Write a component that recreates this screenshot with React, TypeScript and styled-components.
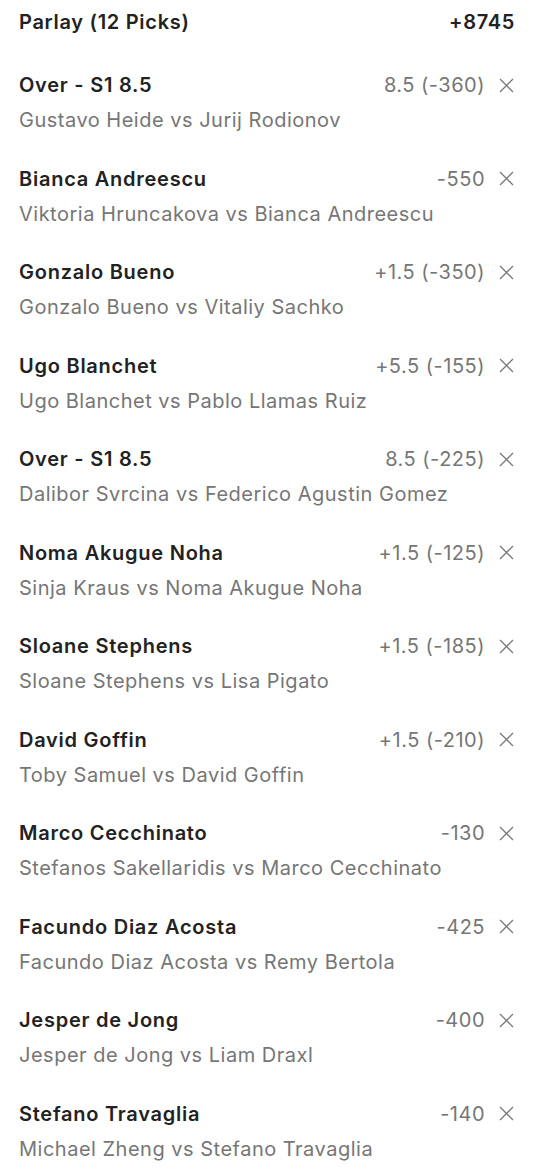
import styled, { createGlobalStyle } from 'styled-components'

type Pick = {
  title: string
  odds: string
  match: string
}

const picks: Pick[] = [
  { title: 'Over - S1 8.5', odds: '8.5 (-360)', match: 'Gustavo Heide vs Jurij Rodionov' },
  { title: 'Bianca Andreescu', odds: '-550', match: 'Viktoria Hruncakova vs Bianca Andreescu' },
  { title: 'Gonzalo Bueno', odds: '+1.5 (-350)', match: 'Gonzalo Bueno vs Vitaliy Sachko' },
  { title: 'Ugo Blanchet', odds: '+5.5 (-155)', match: 'Ugo Blanchet vs Pablo Llamas Ruiz' },
  { title: 'Over - S1 8.5', odds: '8.5 (-225)', match: 'Dalibor Svrcina vs Federico Agustin Gomez' },
  { title: 'Noma Akugue Noha', odds: '+1.5 (-125)', match: 'Sinja Kraus vs Noma Akugue Noha' },
  { title: 'Sloane Stephens', odds: '+1.5 (-185)', match: 'Sloane Stephens vs Lisa Pigato' },
  { title: 'David Goffin', odds: '+1.5 (-210)', match: 'Toby Samuel vs David Goffin' },
  { title: 'Marco Cecchinato', odds: '-130', match: 'Stefanos Sakellaridis vs Marco Cecchinato' },
  { title: 'Facundo Diaz Acosta', odds: '-425', match: 'Facundo Diaz Acosta vs Remy Bertola' },
  { title: 'Jesper de Jong', odds: '-400', match: 'Jesper de Jong vs Liam Draxl' },
  { title: 'Stefano Travaglia', odds: '-140', match: 'Michael Zheng vs Stefano Travaglia' },
]

const GlobalStyle = createGlobalStyle`
  body {
    margin: 0;
    background: #fff;
    font-family: Inter, "Noto Sans", sans-serif;
  }
`

const Slip = styled.div`
  width: 534px;
  padding: 0 19px;
  box-sizing: border-box;
`

const Header = styled.div`
  display: flex;
  justify-content: space-between;
  align-items: center;
  padding: 8px 0 19.75px;
  height: 28px;
  font-size: 20px;
  font-weight: 600;
  letter-spacing: 0.7px;
  color: #222;
`

const Row = styled.div`
  display: flex;
  flex-direction: column;
  gap: 7px;
  padding: 15.25px 0;
`

const TopLine = styled.div`
  display: flex;
  align-items: center;
  height: 28px;
`

const Title = styled.span`
  flex: 1;
  font-size: 20px;
  font-weight: 600;
  letter-spacing: 0.75px;
  color: #222;
`

const Odds = styled.span`
  font-size: 20px;
  letter-spacing: 0.5px;
  color: #767676;
`

const Remove = styled.button`
  display: flex;
  align-items: center;
  justify-content: center;
  width: 17px;
  height: 17px;
  margin-left: 13px;
  padding: 0;
  border: 0;
  background: none;
  cursor: pointer;
`

const Match = styled.div`
  height: 28px;
  line-height: 28px;
  font-size: 20px;
  letter-spacing: 0.5px;
  color: #767676;
`

const CloseIcon = () => (
  <svg width="15" height="15" viewBox="0 0 15 15">
    <path d="M1 1 L14 14 M14 1 L1 14" stroke="#7a7a7a" strokeWidth="1.3" />
  </svg>
)

export default function App() {
  return (
    <>
      <GlobalStyle />
      <Slip>
        <Header>
          <span>Parlay (12 Picks)</span>
          <span>+8745</span>
        </Header>
        {picks.map((p, i) => (
          <Row key={i}>
            <TopLine>
              <Title>{p.title}</Title>
              <Odds>{p.odds}</Odds>
              <Remove aria-label="Remove">
                <CloseIcon />
              </Remove>
            </TopLine>
            <Match>{p.match}</Match>
          </Row>
        ))}
      </Slip>
    </>
  )
}
